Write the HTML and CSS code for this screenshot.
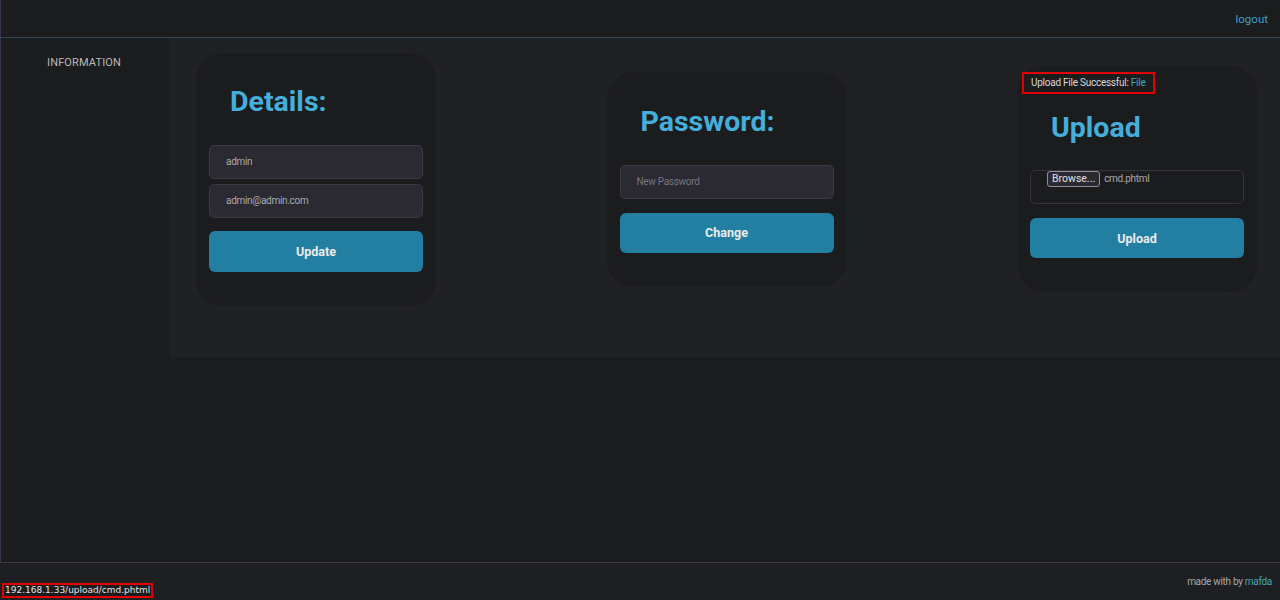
FILE: index.html
```html
<!DOCTYPE html>
<html>
<head>
<meta charset="utf-8">
<link rel="stylesheet" href="styles.css">
</head>
<body>
<header class="topbar">
  <a class="logout" href="#">logout</a>
</header>
<div class="main">
  <aside class="sidebar">
    <div class="side-item">INFORMATION</div>
  </aside>
  <section class="content">
    <div class="card card-details">
      <h2 class="card-title">Details:</h2>
      <div class="field">admin</div>
      <div class="field field-second">admin@admin.com</div>
      <button class="btn btn-details">Update</button>
    </div>
    <div class="card card-password">
      <h2 class="card-title">Password:</h2>
      <div class="field placeholder">New Password</div>
      <button class="btn">Change</button>
    </div>
    <div class="card card-upload">
      <div class="msg"><span>Upload File Successful: </span><span class="msg-link">File</span></div>
      <h2 class="card-title">Upload</h2>
      <div class="filebox"><span class="browse">Browse...</span><span class="fname">cmd.phtml</span></div>
      <button class="btn">Upload</button>
    </div>
  </section>
</div>
<footer class="footer">
  <span>made with by <span class="author">mafda</span></span>
</footer>
<div class="status">192.168.1.33/upload/cmd.phtml</div>
</body>
</html>
```
FILE: styles.css
```css
html, body {
  margin: 0;
  padding: 0;
}
body {
  width: 1280px;
  height: 600px;
  background: #1b1c1e;
  font-family: Roboto, "Liberation Sans", sans-serif;
  display: flex;
  flex-direction: column;
  position: relative;
  overflow: hidden;
  box-shadow: inset 1px 0 0 #3a3350;
}
.topbar {
  height: 37px;
  border-bottom: 1px solid #2c4858;
  display: flex;
  justify-content: flex-end;
  align-items: center;
  padding-right: 12px;
  flex-shrink: 0;
}
.logout {
  color: #3f9fc7;
  font-size: 11.5px;
  text-decoration: none;
}
.main {
  flex: 1;
  display: flex;
  align-items: flex-start;
}
.sidebar {
  width: 170px;
  flex-shrink: 0;
  padding-top: 18px;
  padding-left: 47px;
  box-sizing: border-box;
}
.side-item {
  color: #b9b9b9;
  font-size: 11px;
  line-height: 14px;
  letter-spacing: 0.15px;
}
.content {
  flex: 1;
  height: 319px;
  box-sizing: border-box;
  background: #202124;
  display: flex;
  justify-content: space-between;
  align-items: center;
  padding: 15px 23px 52px 26px;
}
.card {
  width: 240px;
  box-sizing: border-box;
  background: #1b1c1e;
  border-radius: 26px;
  padding: 31px 13px 34px;
  display: flex;
  flex-direction: column;
}
.card-password {
  padding-top: 32px;
}
.card-upload {
  padding-top: 6px;
  padding-bottom: 34px;
}
.card-title {
  margin: 0 0 25px;
  padding-left: 21px;
  font-size: 28.5px;
  line-height: 36px;
  font-weight: 700;
  color: #45aedb;
}
.card-upload .card-title {
  margin-top: 2px;
  margin-bottom: 24px;
}
.field {
  height: 34px;
  box-sizing: border-box;
  background: #2b2a33;
  border: 1px solid #3a3a42;
  border-radius: 5px;
  padding-left: 16px;
  display: flex;
  align-items: center;
  color: #a9a9ad;
  font-size: 10px;
  letter-spacing: -0.3px;
}
.field-second {
  margin-top: 5px;
}
.placeholder {
  color: #76767c;
}
.btn {
  margin-top: 14px;
  height: 40px;
  border: none;
  border-radius: 6px;
  background: #237fa2;
  color: #ececec;
  font-family: Roboto, "Liberation Sans", sans-serif;
  font-size: 12.5px;
  font-weight: 700;
  padding: 0;
}
.btn-details {
  margin-top: 13px;
  height: 41px;
}
.msg {
  align-self: flex-start;
  margin-left: -8px;
  margin-bottom: 14px;
  border: 2px solid #e00000;
  padding: 2px 7px;
  font-size: 10px;
  line-height: 14px;
  letter-spacing: -0.25px;
  color: #d8d8d8;
}
.msg-link {
  color: #45a9b8;
}
.filebox {
  height: 34px;
  box-sizing: border-box;
  border: 1px solid #34343a;
  border-radius: 5px;
  padding-left: 16px;
  display: flex;
  align-items: flex-start;
  gap: 4px;
  font-size: 10px;
}
.browse {
  height: 16px;
  box-sizing: border-box;
  padding: 0 4px;
  line-height: 14px;
  background: #2b2a33;
  border: 1px solid #8f8f9d;
  border-radius: 3px;
  color: #e0e0e0;
  font-size: 10.5px;
}
.fname {
  line-height: 16px;
  color: #a9a9ad;
  letter-spacing: -0.3px;
}
.footer {
  height: 38px;
  flex-shrink: 0;
  box-sizing: border-box;
  border-top: 1px solid #3c3c3f;
  background: #1e1f22;
  display: flex;
  justify-content: flex-end;
  align-items: center;
  padding-right: 8px;
  font-size: 10px;
  letter-spacing: -0.3px;
  color: #a9a9a9;
}
.author {
  color: #45a9b8;
}
.status {
  position: absolute;
  left: 2px;
  bottom: 2px;
  border: 2px solid #e00000;
  background: #1c1c1e;
  color: #e2e2e2;
  font-family: "DejaVu Sans", sans-serif;
  font-size: 9px;
  line-height: 11px;
  padding: 0 1px;
}
```
